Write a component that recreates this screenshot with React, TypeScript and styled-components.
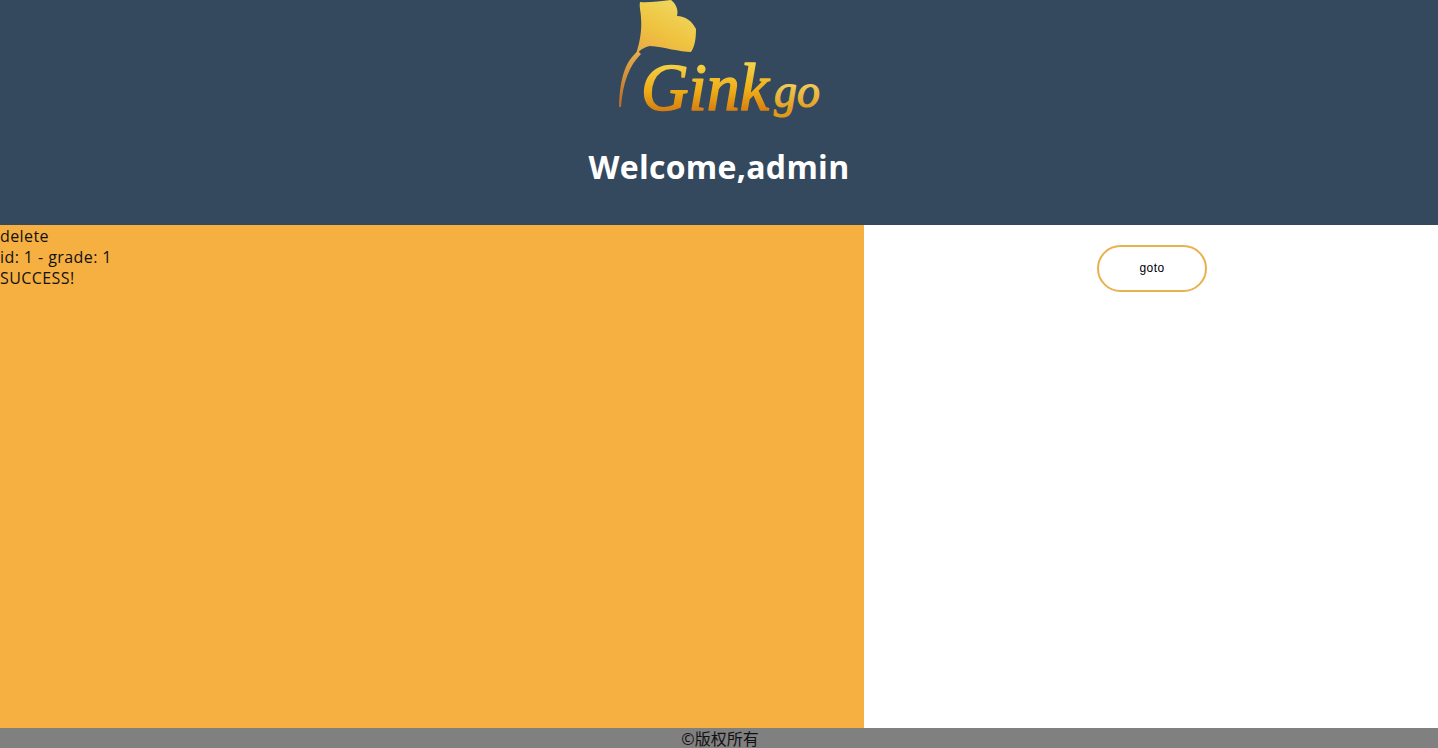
import styled, { createGlobalStyle } from 'styled-components'

const GlobalStyle = createGlobalStyle`
  html, body {
    margin: 0;
    padding: 0;
    height: 100%;
    overflow: hidden;
    font-family: "Open Sans", "Noto Sans CJK SC", sans-serif;
  }
`
const Page = styled.div`
  display: flex;
  flex-direction: column;
  height: 100vh;
`
const Header = styled.header`
  flex-shrink: 0;
  display: flex;
  flex-direction: column;
  align-items: center;
  height: 225px;
  background: #35495e;
`
const Title = styled.h1`
  margin: 15px 0 0;
  color: #fff;
  font-family: "Open Sans", sans-serif;
  font-size: 32px;
  line-height: 44px;
  font-weight: 700;
  letter-spacing: 0.3px;
`
const Main = styled.main`
  flex-grow: 1;
  display: grid;
  grid-template-columns: 864px 1fr;
`
const Content = styled.section`
  padding-top: 1px;
  background: #f6b041;
  color: #111;
  font-size: 16px;
  line-height: 21px;
  letter-spacing: 0.42px;
`
const Side = styled.aside`
  display: flex;
  justify-content: center;
  align-items: flex-start;
  padding: 20px 0 0 2px;
  background: #fff;
`
const GotoButton = styled.button`
  box-sizing: border-box;
  width: 110px;
  height: 47px;
  padding: 0 6px 2px;
  border: 2px solid #e9b04e;
  border-radius: 24px;
  background: #fff;
  color: #000;
  font-family: "Liberation Sans", Arial, sans-serif;
  font-size: 12px;
  letter-spacing: 0.4px;
`
const Footer = styled.footer`
  flex-shrink: 0;
  height: 20px;
  padding-left: 2px;
  background: #808080;
  color: #111;
  font-size: 16px;
  line-height: 22px;
  text-align: center;
`

const Logo = () => (
  <svg width="240" height="130" viewBox="0 0 240 130" style={{ display: 'block', marginLeft: '-2px' }}>
    <defs>
      <linearGradient id="leaf" x1="0.1" y1="1" x2="0.7" y2="0">
        <stop offset="0" stopColor="#e9a948" />
        <stop offset="0.45" stopColor="#efc33f" />
        <stop offset="1" stopColor="#f0d860" />
      </linearGradient>
      <linearGradient id="word" x1="0" y1="0" x2="0" y2="1">
        <stop offset="0.1" stopColor="#f6dc55" />
        <stop offset="0.55" stopColor="#eeac16" />
        <stop offset="0.9" stopColor="#cf6f10" />
      </linearGradient>
      <linearGradient id="go" x1="0" y1="0" x2="0" y2="1">
        <stop offset="0.2" stopColor="#f4e070" />
        <stop offset="0.9" stopColor="#e09a18" />
      </linearGradient>
      <linearGradient id="stem" x1="0" y1="0" x2="0" y2="1">
        <stop offset="0" stopColor="#e8b04a" />
        <stop offset="1" stopColor="#b86a25" />
      </linearGradient>
    </defs>
    <path
      d="M42 2 C50 3 62 1 73 0 C77 3 81 9 79 16 C87 16 94 21 98 29 C98 38 97 46 93 52 C82 52 66 47 52 46 C46 47 41 51 38 54 C42 42 44 30 43 18 C43 12 41 7 42 2 Z"
      fill="url(#leaf)"
    />
    <path d="M40 51 C29 60 22 74 21 107 L23 107 C25 82 31 66 43 54 Z" fill="url(#stem)" />
    <text
      x="43"
      y="110"
      fill="url(#word)"
      stroke="url(#word)"
      strokeWidth="1.6"
      strokeLinejoin="round"
      fontFamily="'Liberation Serif', serif"
      fontStyle="italic"
      fontSize="68"
      textLength="128"
      lengthAdjust="spacingAndGlyphs"
    >
      Gink
    </text>
    <text
      x="176"
      y="107"
      fill="url(#go)"
      stroke="url(#go)"
      strokeWidth="1.2"
      strokeLinejoin="round"
      fontFamily="'Liberation Serif', serif"
      fontStyle="italic"
      fontSize="48"
      textLength="46"
      lengthAdjust="spacingAndGlyphs"
    >
      go
    </text>
  </svg>
)

const App = () => (
  <>
    <GlobalStyle />
    <Page>
      <Header>
        <Logo />
        <Title>Welcome,admin</Title>
      </Header>
      <Main>
        <Content>
          <div>delete</div>
          <div>id: 1 - grade: 1</div>
          <div>SUCCESS!</div>
        </Content>
        <Side>
          <GotoButton>goto</GotoButton>
        </Side>
      </Main>
      <Footer>©版权所有</Footer>
    </Page>
  </>
)

export default App
